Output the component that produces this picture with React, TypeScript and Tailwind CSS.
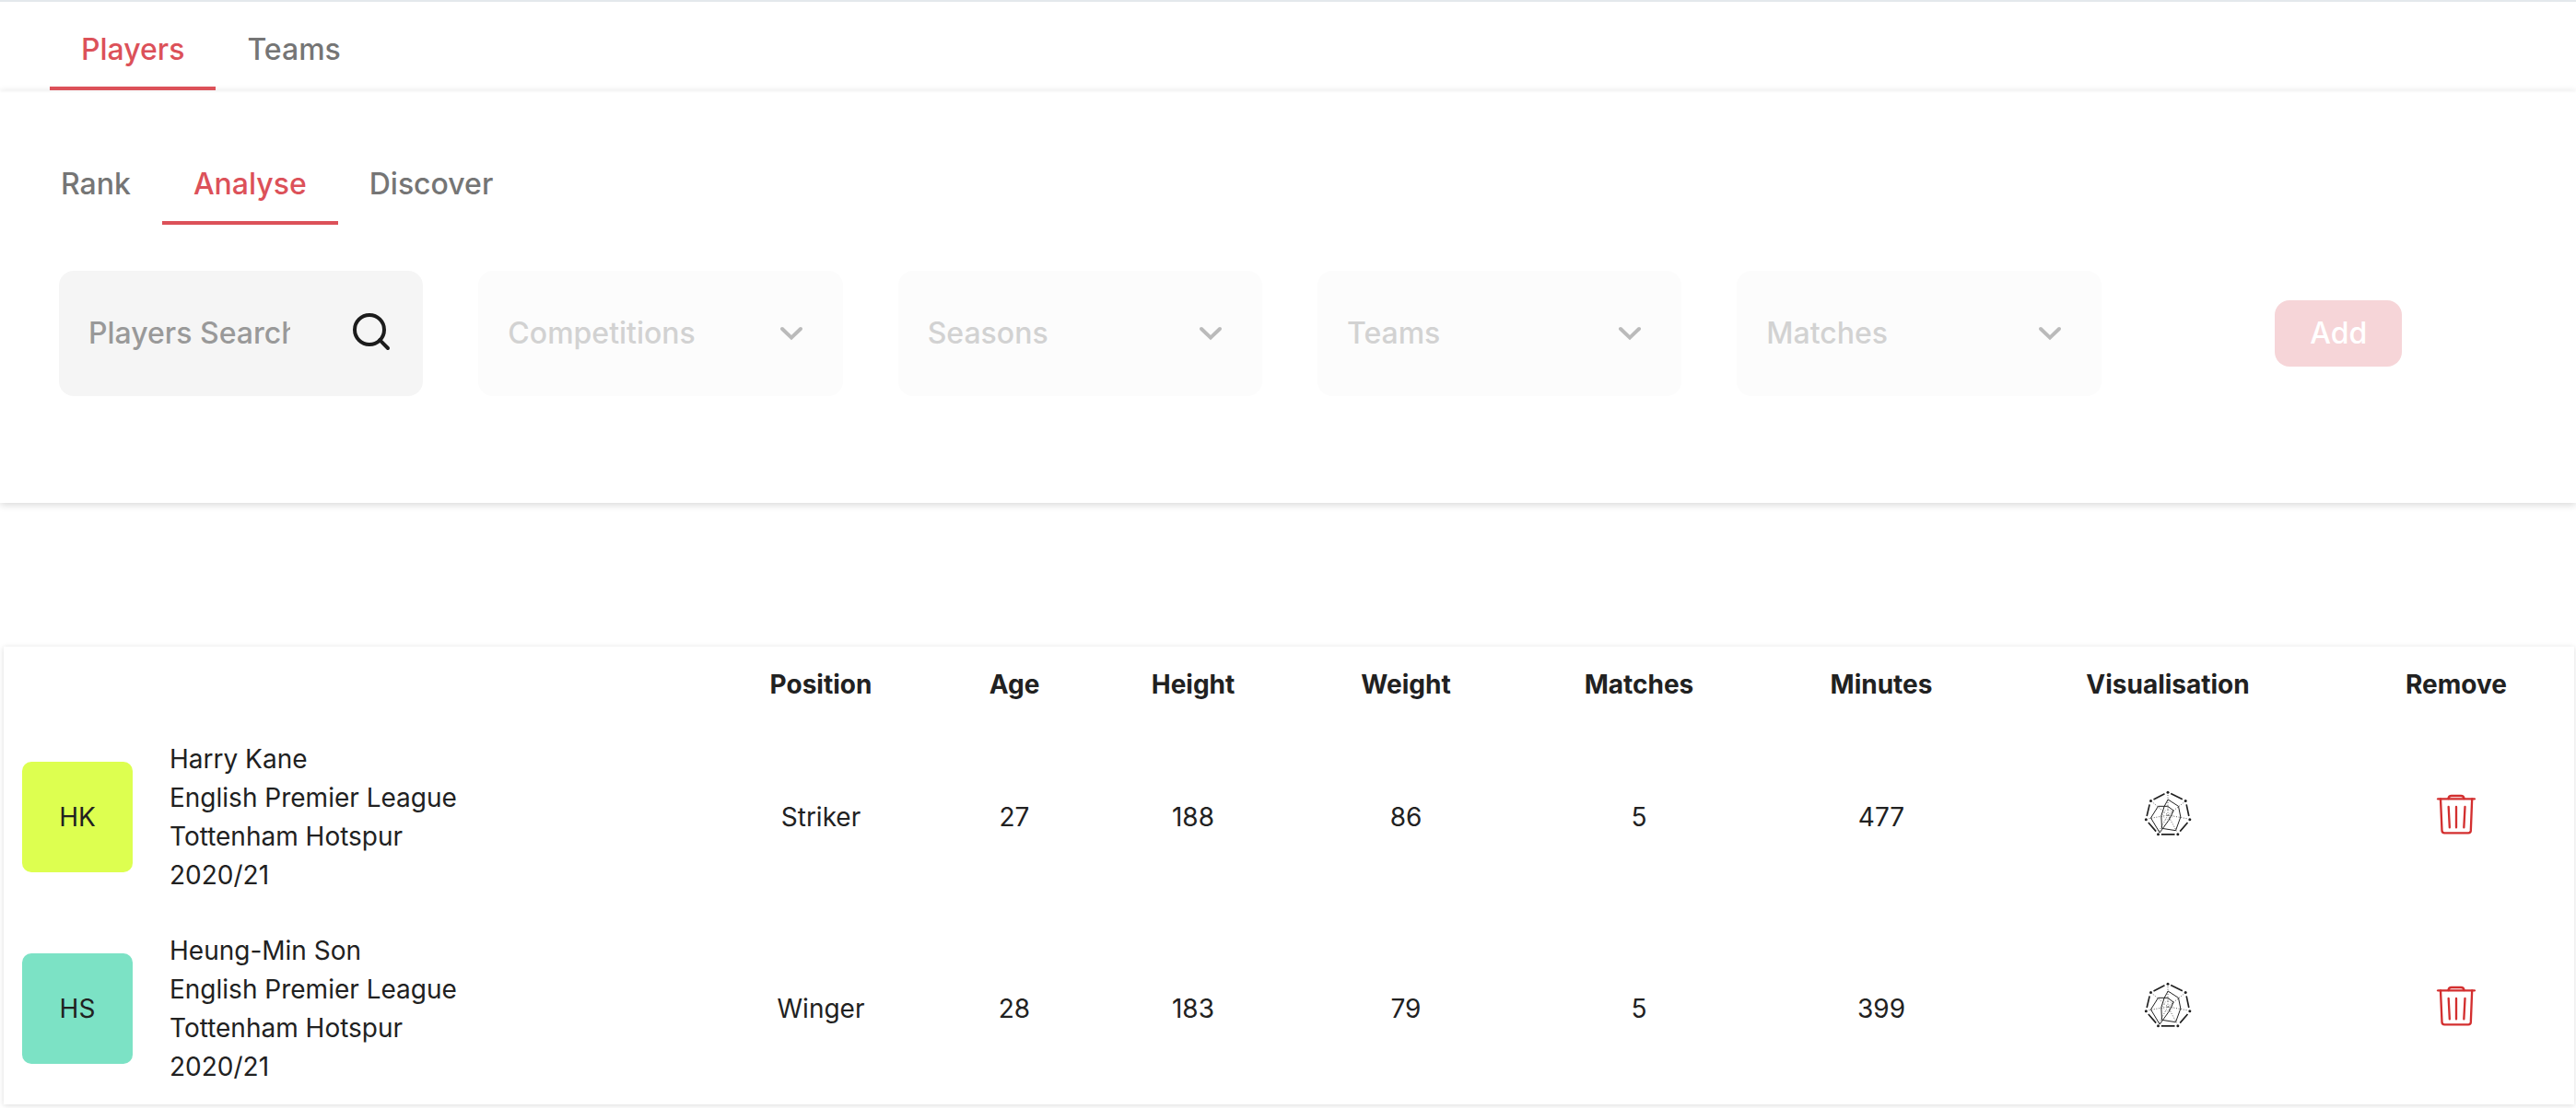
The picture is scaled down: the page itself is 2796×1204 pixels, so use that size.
import { clsx } from "clsx";

type TabProps = { label: string; active?: boolean };

function Tab({ label, active }: TabProps) {
  return (
    <a
      href="#"
      aria-current={active ? "page" : undefined}
      className={clsx(
        "block border-b-4 px-[34px] pb-4 text-[32px] leading-12 font-medium",
        active ? "border-[#dc5159] text-[#dc5159]" : "border-transparent text-[#757575]",
      )}
    >
      {label}
    </a>
  );
}

function SearchIcon() {
  return (
    <svg viewBox="0 1 24 24" className="size-12 shrink-0" fill="none" stroke="#1c1c1c" strokeWidth="2" strokeLinecap="round" aria-hidden="true">
      <circle cx="11" cy="11" r="8" />
      <path d="M21 21l-4.4-4.4" />
    </svg>
  );
}

function ChevronIcon() {
  return (
    <svg viewBox="0 0 24 24" className="pointer-events-none absolute top-1/2 right-8 size-12 -translate-y-1/2" fill="none" stroke="#bababa" strokeWidth="2" strokeLinecap="round" aria-hidden="true">
      <path d="M7 9.500L12 14.300L17 9.500" />
    </svg>
  );
}

function RadarIcon() {
  return (
    <svg viewBox="38.5 48 180 180" className="size-15" fill="none" stroke="#212121" strokeLinejoin="round" aria-hidden="true">
      <g strokeWidth="5">
        <path d="M138 61.500L176 80.500M189 97L197 135M193 156L168 185M107 194.500H151M90 185L65 156M60 135L69 97M82 81L118 62" />
      </g>
      <g strokeWidth="2.200" strokeDasharray="3 5">
        <path d="M128.500 66V132M180 91L128.500 132M190 143L128.500 132M157 184L128.500 132M100 184L128.500 132M67 143L128.500 132M80 91L128.500 132" />
      </g>
      <path d="M128.500 112L142 120L145 134L136 146H121L112 134L115 120Z" strokeWidth="1.500" strokeDasharray="2 4" />
      <g strokeWidth="3">
        <path d="M129 81L163 103L170 138L154 182L109 175L107 134L117 103Z" />
        <path d="M97 103H128L147 117L131 149L102 189L73 141Z" />
      </g>
      <g fill="#212121" stroke="none">
        <circle cx="128.500" cy="57.500" r="4.500" />
        <circle cx="186" cy="85.500" r="4.500" />
        <circle cx="200" cy="146" r="4.500" />
        <circle cx="161" cy="194.500" r="4.500" />
        <circle cx="97" cy="194.500" r="4.500" />
        <circle cx="57.500" cy="146" r="4.500" />
        <circle cx="73" cy="85.500" r="4.500" />
      </g>
    </svg>
  );
}

function TrashIcon() {
  return (
    <svg viewBox="19.500 48 180 180" className="size-15" fill="none" stroke="#d32f2f" strokeWidth="7" strokeLinecap="round" strokeLinejoin="round" aria-hidden="true">
      <path d="M50 79H169" />
      <path d="M84 78Q85 69 94 69H125Q134 69 135 78" />
      <path d="M58.500 79L63 182Q63.500 190 71 190H149Q156.500 190 157 182L161 79" />
      <path d="M84.500 105L88 172M109.500 105V172M138 105L134.500 172" />
    </svg>
  );
}

const filters = ["Competitions", "Seasons", "Teams", "Matches"];

const columns = [
  { label: "Position", width: "w-[262px]" },
  { label: "Age", width: "w-[158px]" },
  { label: "Height", width: "w-[230px]" },
  { label: "Weight", width: "w-[232px]" },
  { label: "Matches", width: "w-[274px]" },
  { label: "Minutes", width: "w-[252px]" },
  { label: "Visualisation", width: "w-[370px]" },
  { label: "Remove", width: "w-[256px]" },
];

const players = [
  {
    initials: "HK",
    color: "bg-[#ddff50]",
    name: "Harry Kane",
    details: ["English Premier League", "Tottenham Hotspur", "2020/21"],
    stats: ["Striker", "27", "188", "86", "5", "477"],
  },
  {
    initials: "HS",
    color: "bg-[#7ce2c5]",
    name: "Heung-Min Son",
    details: ["English Premier League", "Tottenham Hotspur", "2020/21"],
    stats: ["Winger", "28", "183", "79", "5", "399"],
  },
];

export default function App() {
  return (
    <div className="bg-white font-[Inter,sans-serif] text-[#212121]">
      <header className="border-t-2 border-[#e3e8ec] shadow-[0_1px_3px_rgba(0,0,0,0.06)]">
        <nav aria-label="Entity" className="flex pt-7 pl-[54px]">
          <Tab label="Players" active />
          <Tab label="Teams" />
        </nav>
      </header>

      <section className="pt-[78px] pb-29 shadow-[0_2px_8px_rgba(0,0,0,0.16)]">
        <nav aria-label="Mode" className="flex pl-8">
          <Tab label="Rank" />
          <Tab label="Analyse" active />
          <Tab label="Discover" />
        </nav>

        <form className="mt-[50px] grid grid-cols-6 items-center gap-15 pr-15 pl-16 text-[32px] leading-12 font-medium">
          <label className="flex h-34 items-center justify-between gap-16 rounded-2xl bg-[#f5f5f5] px-8">
            <input
              type="text"
              aria-label="Players Search"
              placeholder="Players Search"
              className="w-full min-w-0 bg-transparent outline-none placeholder:text-[#999999]"
            />
            <SearchIcon />
          </label>

          {filters.map((label) => (
            <div key={label} className="relative">
              <select
                disabled
                aria-label={label}
                className="block h-34 w-full appearance-none rounded-2xl bg-[#fcfcfc] px-8 text-[#d2d2d2] opacity-100"
              >
                <option>{label}</option>
              </select>
              <ChevronIcon />
            </div>
          ))}

          <button
            type="submit"
            disabled
            className="h-18 min-w-[138px] justify-self-center rounded-2xl bg-[#f6d5d8] px-8 text-white"
          >
            Add
          </button>
        </form>
      </section>

      <main className="pt-39 pr-0.5 pb-1 pl-1">
        <div className="shadow-[0_1px_6px_rgba(0,0,0,0.14)]">
          <table className="w-full bg-white text-center text-[28px] leading-[42px]">
            <thead>
              <tr className="h-[81px]">
                <td className="w-[756px]" />
                {columns.map(({ label, width }) => (
                  <th key={label} scope="col" className={clsx("font-bold", width)}>
                    {label}
                  </th>
                ))}
              </tr>
            </thead>
            <tbody>
              {players.map(({ initials, color, name, details, stats }) => (
                <tr key={name}>
                  <th scope="row" className="px-5 py-5 text-left font-normal">
                    <div className="flex items-center gap-10">
                      <span className={clsx("flex size-30 shrink-0 items-center justify-center rounded-[10px]", color)}>
                        {initials}
                      </span>
                      <div>
                        <p>{name}</p>
                        {details.map((line) => (
                          <p key={line}>{line}</p>
                        ))}
                      </div>
                    </div>
                  </th>
                  {stats.map((value, i) => (
                    <td key={columns[i].label}>{value}</td>
                  ))}
                  <td>
                    <button type="button" aria-label={`Visualise ${name}`} className="align-middle">
                      <RadarIcon />
                    </button>
                  </td>
                  <td>
                    <button type="button" aria-label={`Remove ${name}`} className="align-middle">
                      <TrashIcon />
                    </button>
                  </td>
                </tr>
              ))}
            </tbody>
          </table>
        </div>
      </main>
    </div>
  );
}
